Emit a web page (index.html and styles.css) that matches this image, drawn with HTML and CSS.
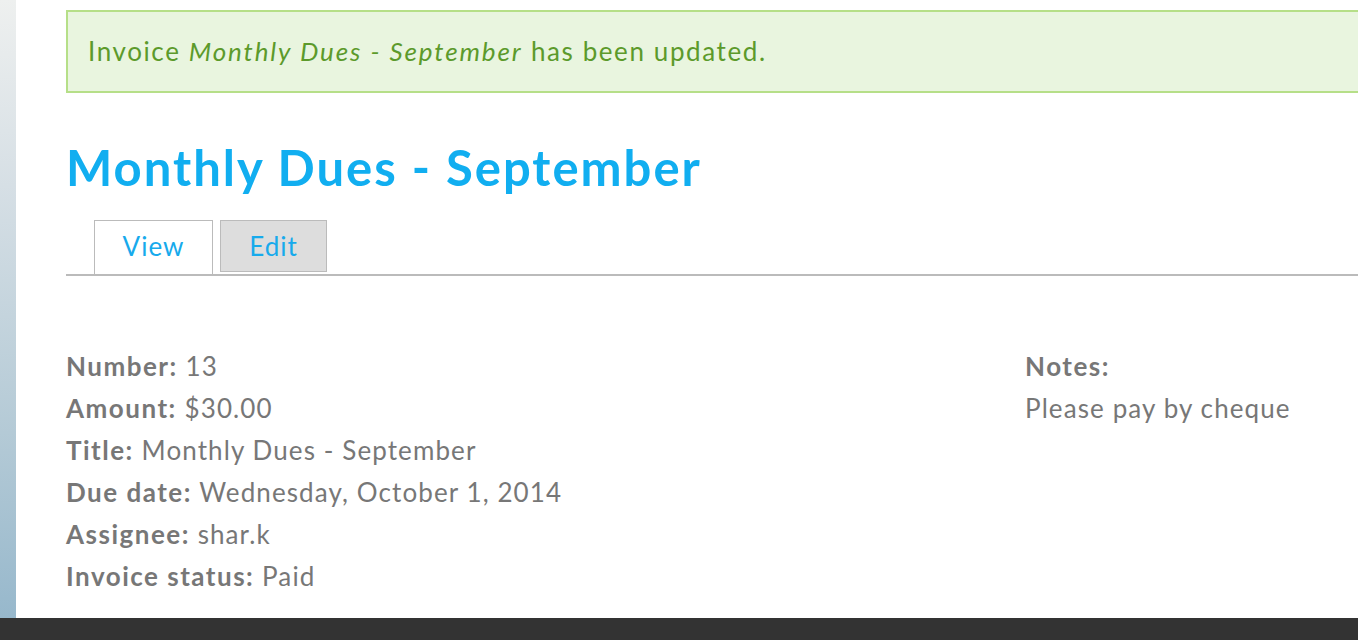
FILE: index.html
```html
<!DOCTYPE html>
<html lang="en">
<head>
  <meta charset="UTF-8">
  <title>Monthly Dues - September</title>
  <link rel="stylesheet" href="styles.css">
</head>
<body>
  <div class="layout">
    <div class="sidebar"></div>

    <div class="main">
      <!-- status message -->
      <div class="alert">
        Invoice <em>Monthly Dues - September</em> has been updated.
      </div>

      <h1 class="page-title">Monthly Dues - September</h1>

      <ul class="tabs">
        <li class="active"><a href="#">View</a></li>
        <li><a href="#">Edit</a></li>
      </ul>

      <!-- invoice details -->
      <div class="invoice">
        <div class="fields">
          <div class="field"><b>Number:</b> 13</div>
          <div class="field"><b>Amount:</b> $30.00</div>
          <div class="field"><b>Title:</b> Monthly Dues - September</div>
          <div class="field"><b>Due date:</b> Wednesday, October 1, 2014</div>
          <div class="field"><b>Assignee:</b> shar.k</div>
          <div class="field"><b>Invoice status:</b> Paid</div>
        </div>
        <div class="notes">
          <div class="field"><b>Notes:</b></div>
          <div class="field">Please pay by cheque</div>
        </div>
      </div>
    </div>
  </div>

  <div class="footer"></div>
</body>
</html>
```

FILE: styles.css
```css
body {
  margin: 0;
  font-family: Lato, "Open Sans", sans-serif;
  background: #fff;
  overflow: hidden;
}
.layout {
  display: flex;
  height: 618px;
}
.sidebar {
  width: 16px;
  flex-shrink: 0;
  background: linear-gradient(to bottom, #eef0ef, #d6dfe5 30%, #b4cad6 70%, #97b8cc);
}
.main {
  flex: 1;
  padding: 10px 0 0 50px;
  overflow: hidden;
}
.alert {
  width: calc(100% + 20px);
  height: 79px;
  box-sizing: content-box;
  border: 2px solid #b6df88;
  background: #e9f5df;
  color: #5c9a2b;
  font-size: 26px;
  letter-spacing: 1.6px;
  line-height: 79px;
  padding-left: 20px;
}
.alert em {
  font-style: italic;
  letter-spacing: 1.9px;
}
.page-title {
  margin: 46px 0 0;
  font-size: 49px;
  font-weight: 700;
  letter-spacing: 2px;
  line-height: 56px;
  color: #11aef0;
}
.tabs {
  list-style: none;
  margin: 25px 0 0;
  padding: 0 0 0 28px;
  display: flex;
  align-items: flex-start;
  gap: 7px;
  height: 54px;
  border-bottom: 2px solid #bbb;
}
.tabs li {
  box-sizing: border-box;
  border: 1px solid #bbb;
  background: #ddd;
  height: 52px;
  width: 107px;
  text-align: center;
}
.tabs li.active {
  background: #fff;
  border-bottom: none;
  height: 54px;
  width: 119px;
}
.tabs a {
  display: block;
  line-height: 50px;
  font-size: 26px;
  letter-spacing: 1px;
  color: #17aaec;
  text-decoration: none;
}
.invoice {
  display: grid;
  grid-template-columns: 959px 1fr;
  margin-top: 69px;
  color: #777;
  font-size: 26px;
  letter-spacing: 1.1px;
}
.field {
  line-height: 42px;
}
.field b {
  font-weight: 700;
  letter-spacing: 1.5px;
}
.footer {
  height: 22px;
  background: #333;
}
```
